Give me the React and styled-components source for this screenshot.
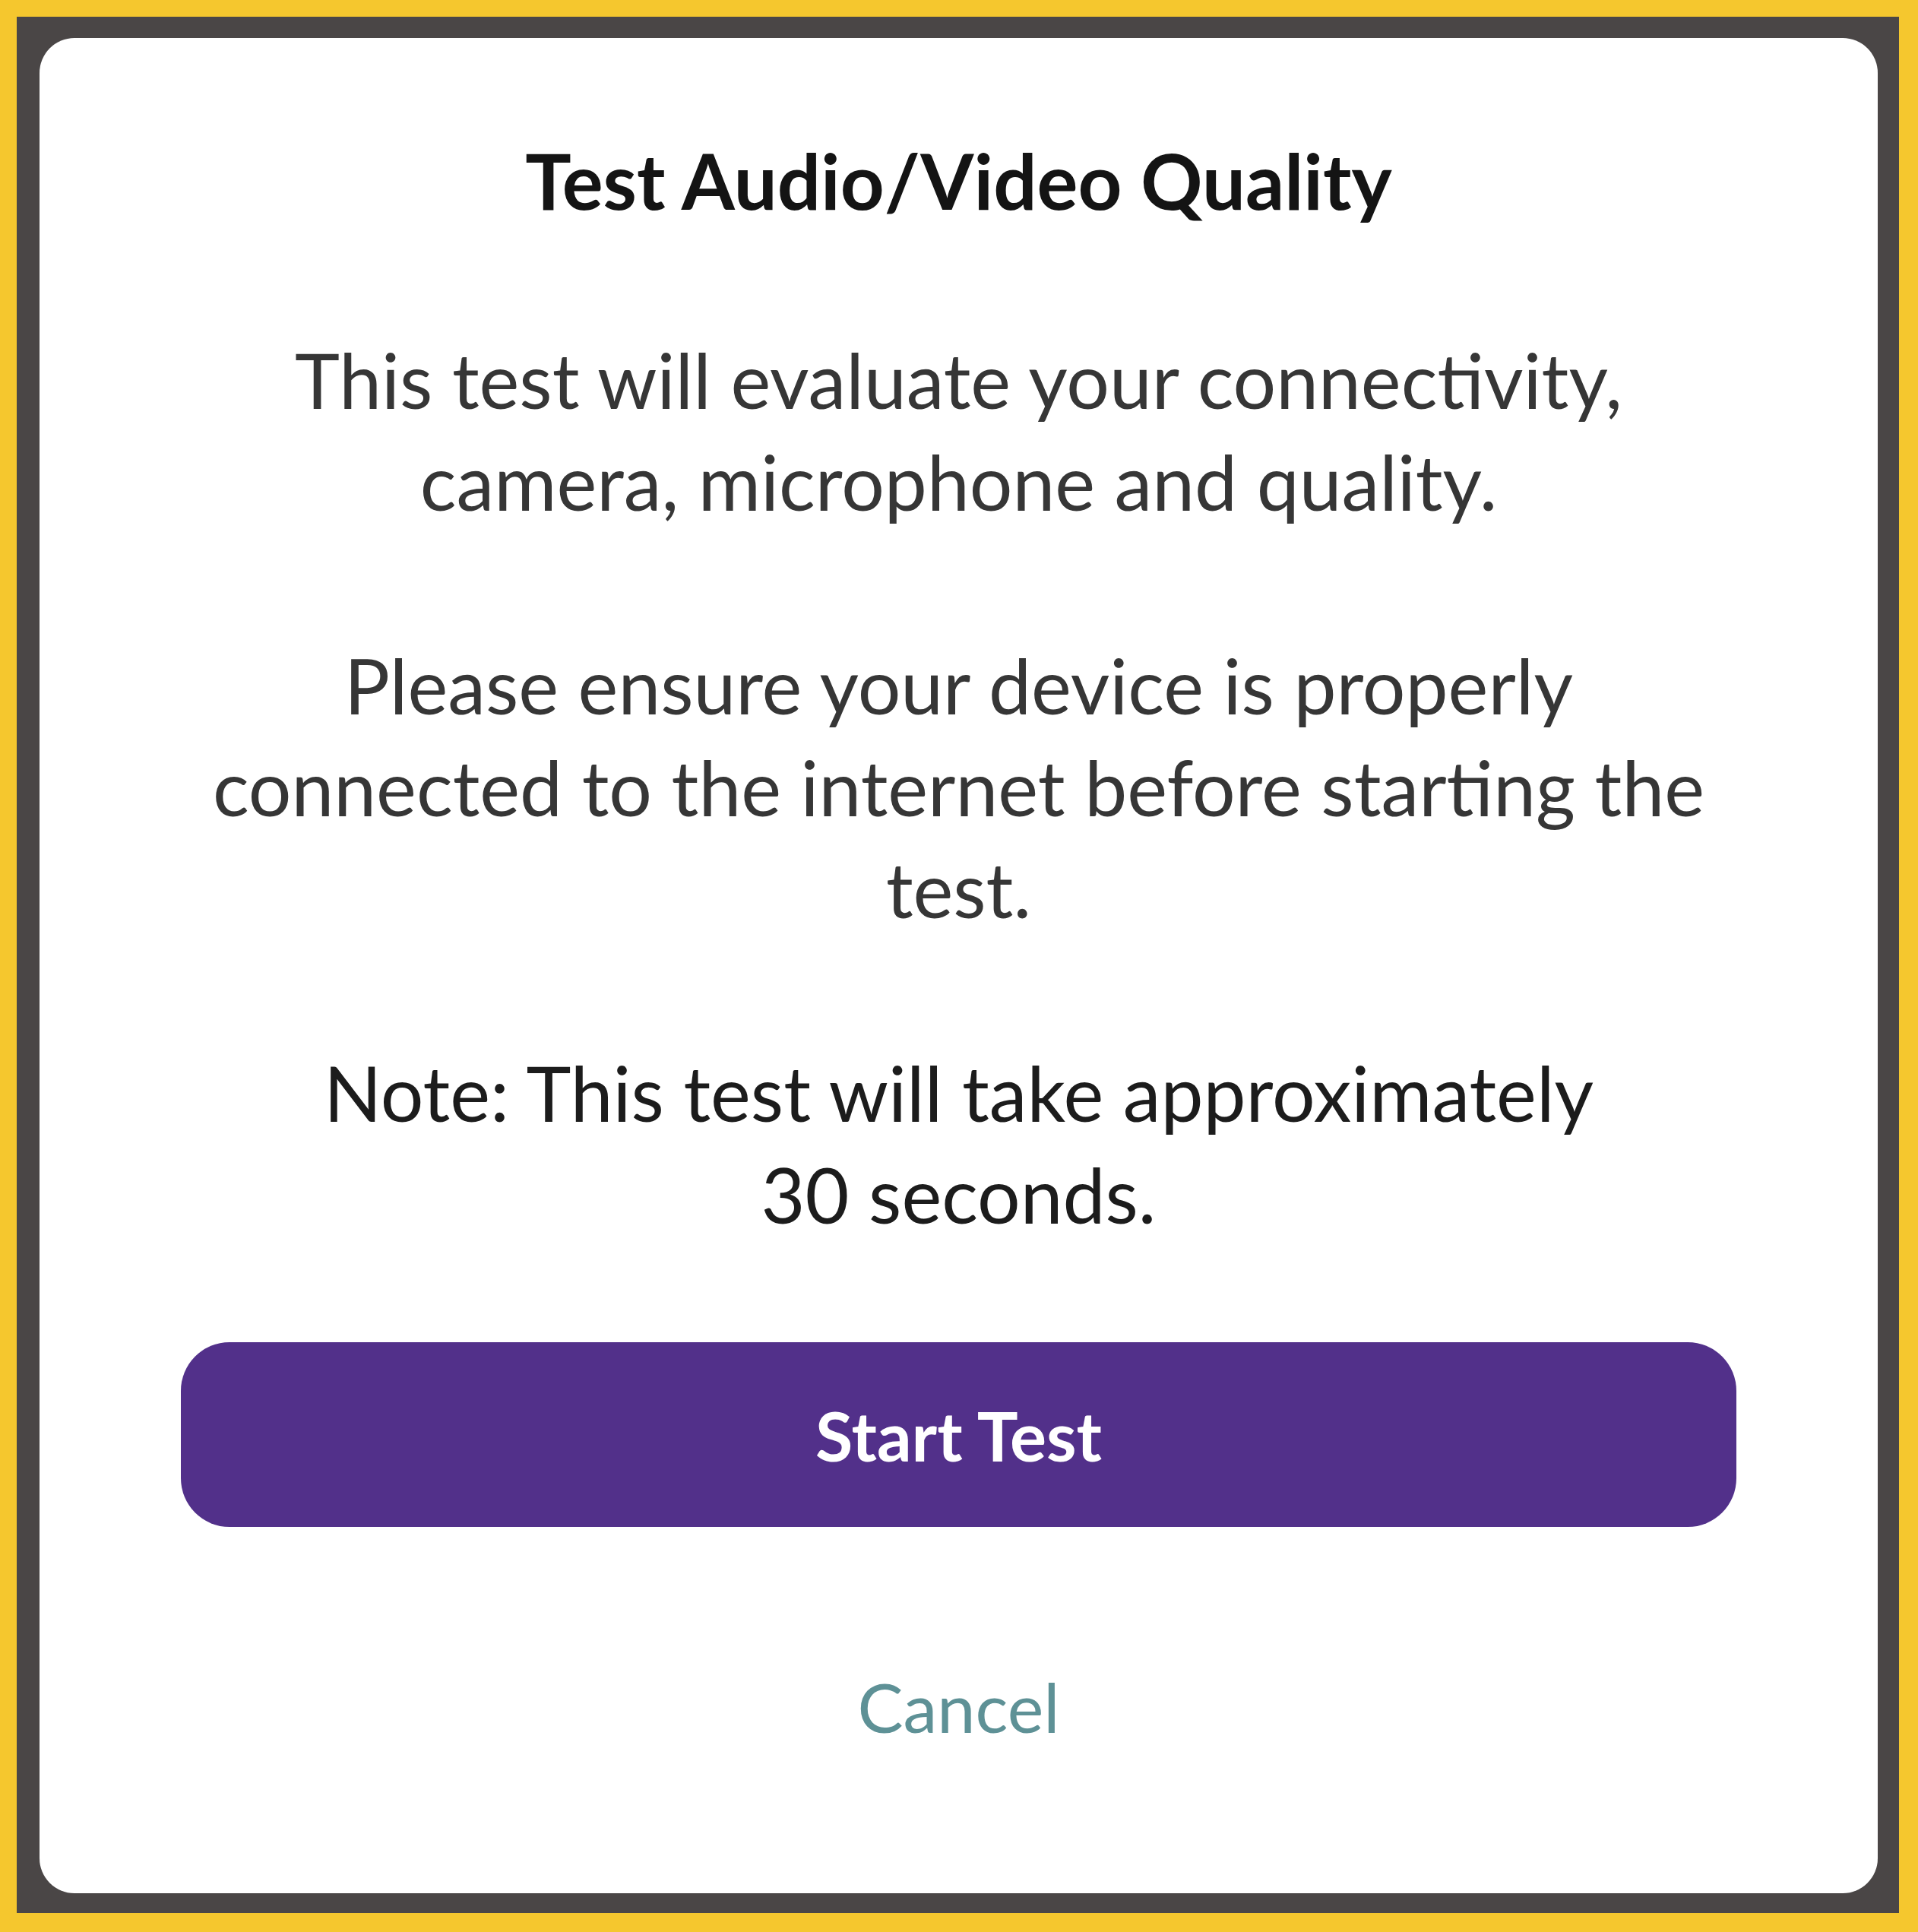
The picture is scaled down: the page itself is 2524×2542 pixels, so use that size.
import React from 'react';
import styled, { createGlobalStyle } from 'styled-components';

const GlobalStyle = createGlobalStyle`
  html, body {
    margin: 0;
    padding: 0;
    background: #f5c72e;
  }
  * {
    box-sizing: border-box;
  }
`;

const Frame = styled.div`
  width: 2524px;
  height: 2542px;
  padding: 22px 25px 25px 22px;
  background: #f5c72e;
  display: flex;
`;

const Bezel = styled.div`
  flex: 1;
  display: flex;
  padding: 28px 28px 26px 30px;
  background: #4a4646;
`;

const Card = styled.div`
  flex: 1;
  display: flex;
  flex-direction: column;
  align-items: center;
  background: #ffffff;
  border-radius: 46px;
  padding: 122px 186px 0;
  font-family: Lato, "Open Sans", sans-serif;
  text-align: center;
`;

const Title = styled.h1`
  margin: 0;
  font-size: 101px;
  line-height: 130px;
  font-weight: 700;
  color: #141414;
`;

const Body = styled.div`
  margin-top: 130px;
  display: flex;
  flex-direction: column;
  gap: 134px;
`;

const Paragraph = styled.p`
  margin: 0;
  font-size: 100px;
  line-height: 134px;
  font-weight: 400;
  color: ${({ strong }) => (strong ? '#1c1c1c' : '#363636')};
`;

const StartButton = styled.button`
  margin-top: 128px;
  width: 100%;
  height: 243px;
  border: none;
  border-radius: 64px;
  background: #52308a;
  color: #ffffff;
  font-family: inherit;
  font-size: 90px;
  font-weight: 700;
  cursor: pointer;
`;

const CancelLink = styled.button`
  margin-top: 181px;
  border: none;
  background: transparent;
  color: #5e9196;
  font-family: inherit;
  font-size: 90px;
  font-weight: 400;
  cursor: pointer;
`;

export default function App() {
  return (
    <>
      <GlobalStyle />
      <Frame>
        <Bezel>
          <Card>
            <Title>Test Audio/Video Quality</Title>
            <Body>
              <Paragraph>
                This test will evaluate your connectivity,
                <br />
                camera, microphone and quality.
              </Paragraph>
              <Paragraph>
                Please ensure your device is properly
                <br />
                connected to the internet before starting the
                <br />
                test.
              </Paragraph>
              <Paragraph strong>
                Note: This test will take approximately
                <br />
                30 seconds.
              </Paragraph>
            </Body>
            <StartButton>Start Test</StartButton>
            <CancelLink>Cancel</CancelLink>
          </Card>
        </Bezel>
      </Frame>
    </>
  );
}
